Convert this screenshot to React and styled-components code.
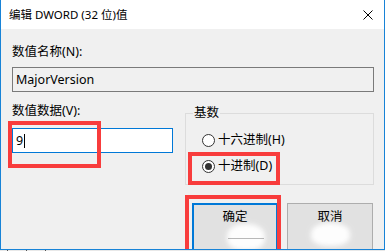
import React from "react";
import styled, { createGlobalStyle } from "styled-components";

const Global = createGlobalStyle`
  html, body { margin: 0; padding: 0; background: #f0f0f0; }
  body { font-family: "Noto Sans", "Noto Sans CJK SC", sans-serif; color: #000; }
  #root { width: 385px; height: 251px; overflow: hidden; }
`;

const Screen = styled.div`
  width: 385px;
  height: 251px;
  display: flex;
  flex-direction: column;
  background: #f0f0f0;
  overflow: hidden;
`;

const Window = styled.div`
  position: relative;
  height: 250px;
  flex: none;
  box-sizing: border-box;
  border-left: 1px solid #1883d7;
  border-right: 1px solid #1883d7;
  border-bottom: 1px solid #1883d7;
  display: flex;
  flex-direction: column;
  overflow: hidden;
  background: #f0f0f0;
`;

const TitleBar = styled.div`
  height: 29px;
  flex: none;
  background: #fff;
  display: flex;
  align-items: center;
  padding-left: 8px;
`;

const Title = styled.span`
  font-size: 11.5px;
  line-height: 16px;
  color: #000;
  white-space: nowrap;
`;

const CloseBox = styled.div`
  margin-left: auto;
  margin-right: 11px;
  width: 10px;
  height: 10px;
  display: flex;
`;

const Body = styled.div`
  flex: 1;
  display: flex;
  flex-direction: column;
  padding: 15px 10px 0 11px;
`;

const Label = styled.div`
  font-size: 12.5px;
  line-height: 16px;
  height: 16px;
  white-space: nowrap;
`;

const Field = styled.div`
  height: 25px;
  box-sizing: border-box;
  margin-top: ${(p) => p.$gap}px;
  border: 1px solid ${(p) => (p.$active ? "#0078d7" : "#7a7a7a")};
  background: ${(p) => (p.$active ? "#fff" : "#f0f0f0")};
  padding-left: 3px;
  display: flex;
  align-items: center;
  font-size: 12.5px;
  line-height: 16px;
`;

const Caret = styled.span`
  display: inline-block;
  width: 1px;
  height: 14px;
  background: #000;
  margin-left: 1px;
`;

const DataRow = styled.div`
  margin-top: 11px;
  display: flex;
  align-items: flex-start;
  gap: 12px;
`;

const LeftCol = styled.div`
  width: 161px;
  flex: none;
  display: flex;
  flex-direction: column;
`;

const Group = styled.fieldset`
  flex: 1;
  margin: 2px 0 0 0;
  padding: 0;
  border: 1px solid #dcdcdc;
  min-width: 0;
`;

const Legend = styled.legend`
  margin-left: 7px;
  padding: 0 1px;
  font-size: 12.5px;
  line-height: 16px;
`;

const RadioList = styled.div`
  display: flex;
  flex-direction: column;
  gap: 10px;
  padding: 11px 0 10px 16px;
`;

const RadioRow = styled.div`
  display: flex;
  align-items: center;
  gap: 3px;
  height: 16px;
  font-size: 12.5px;
  line-height: 16px;
  white-space: nowrap;
`;

const RadioCircle = styled.span`
  width: 13px;
  height: 13px;
  box-sizing: border-box;
  border: 1px solid #333;
  border-radius: 50%;
  background: #fff;
  display: flex;
  align-items: center;
  justify-content: center;
  flex: none;
`;

const RadioDot = styled.span`
  width: 7px;
  height: 7px;
  border-radius: 50%;
  background: #333;
`;

const ButtonRow = styled.div`
  margin-top: 18px;
  display: flex;
  justify-content: flex-end;
  gap: 9px;
  padding-right: 1px;
`;

const Button = styled.div`
  position: relative;
  width: 86px;
  height: 50px;
  box-sizing: border-box;
  background: #e1e1e1;
  border: ${(p) => (p.$default ? "2px solid #0078d7" : "1px solid #adadad")};
  padding-top: ${(p) => (p.$default ? 4 : 5)}px;
  text-align: center;
  font-size: 12.5px;
  line-height: 16px;
  flex: none;
`;

const Blob = styled.span`
  position: absolute;
  left: ${(p) => p.$x}px;
  top: ${(p) => p.$y}px;
  width: ${(p) => p.$w}px;
  height: ${(p) => p.$h}px;
  background: #fff;
  border-radius: 45% 45% 40% 40%;
  filter: blur(2.5px);
  opacity: 0.95;
`;

const Streak = styled.span`
  position: absolute;
  left: 34px;
  top: 33px;
  width: 36px;
  height: 1px;
  background: #8a8a8a;
  opacity: 0.6;
`;

const Annotation = styled.div`
  position: absolute;
  left: ${(p) => p.$x}px;
  top: ${(p) => p.$y}px;
  width: ${(p) => p.$w}px;
  height: ${(p) => p.$h}px;
  box-sizing: border-box;
  border: 4px solid #f83c3c;
  pointer-events: none;
`;

const BottomStrip = styled.div`
  height: 1px;
  flex: none;
  position: relative;
  background: #e8e8e8;
`;

const Tick = styled.span`
  position: absolute;
  top: 0;
  left: ${(p) => p.$x}px;
  width: 1px;
  height: 1px;
  background: #555;
`;

export default function App() {
  return (
    <>
      <Global />
      <Screen>
        <Window>
          <TitleBar>
            <Title>编辑 DWORD (32 位)值</Title>
            <CloseBox>
              <svg width="10" height="10" viewBox="0 0 10 10">
                <path d="M0.5 0.5 L9.5 9.5 M9.5 0.5 L0.5 9.5" stroke="#000" strokeWidth="1" fill="none" />
              </svg>
            </CloseBox>
          </TitleBar>
          <Body>
            <Label>数值名称(N):</Label>
            <Field $gap={7}>MajorVersion</Field>
            <DataRow>
              <LeftCol>
                <Label>数值数据(V):</Label>
                <Field $gap={9} $active>
                  9<Caret />
                </Field>
              </LeftCol>
              <Group>
                <Legend>基数</Legend>
                <RadioList>
                  <RadioRow>
                    <RadioCircle />
                    十六进制(H)
                  </RadioRow>
                  <RadioRow>
                    <RadioCircle>
                      <RadioDot />
                    </RadioCircle>
                    十进制(D)
                  </RadioRow>
                </RadioList>
              </Group>
            </DataRow>
            <ButtonRow>
              <Button $default>
                确定
                <Blob $x={33} $y={19} $w={38} $h={26} />
                <Streak />
              </Button>
              <Button>
                取消
                <Blob $x={23} $y={19} $w={39} $h={23} />
              </Button>
            </ButtonRow>
          </Body>
          <Annotation $x={7} $y={121} $w={93} $h={47} />
          <Annotation $x={187} $y={152} $w={92} $h={33} />
          <Annotation $x={184} $y={195} $w={96} $h={80} />
        </Window>
        <BottomStrip>
          <Tick $x={7} />
          <Tick $x={26} />
          <Tick $x={45} />
        </BottomStrip>
      </Screen>
    </>
  );
}
